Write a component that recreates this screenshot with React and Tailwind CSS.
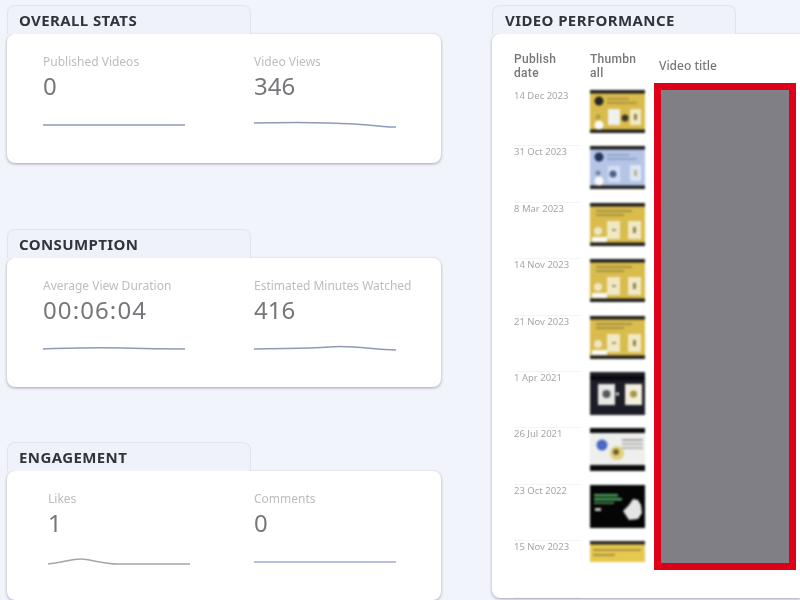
const sans = { fontFamily: '"Noto Sans", sans-serif' };
const headFont = { fontFamily: 'Roboto, sans-serif' };

const videos = [
  { date: '14 Dec 2023', kind: 'gold' },
  { date: '31 Oct 2023', kind: 'blue' },
  { date: '8 Mar 2023', kind: 'goldAlt' },
  { date: '14 Nov 2023', kind: 'goldAlt' },
  { date: '21 Nov 2023', kind: 'goldAlt' },
  { date: '1 Apr 2021', kind: 'dark' },
  { date: '26 Jul 2021', kind: 'light' },
  { date: '23 Oct 2022', kind: 'black' },
  { date: '15 Nov 2023', kind: 'cut' },
];

// thumbnails are pictures in the reference, so they are drawn
const Thumb = ({ kind }) => {
  if (kind === 'cut') {
    return (
      <svg width="55" height="21" viewBox="0 0 55 21" className="shrink-0 blur-[0.8px]">
        <rect width="55" height="21" fill="#e6c84f" />
        <rect width="55" height="3.5" fill="#2a2620" />
        <rect x="3" y="8" width="48" height="2" fill="#a8923c" />
        <rect x="3" y="13" width="22" height="2" fill="#a8923c" />
      </svg>
    );
  }
  if (kind === 'dark') {
    return (
      <svg width="55" height="43" viewBox="0 0 55 43" className="shrink-0 blur-[0.8px]">
        <rect width="55" height="43" fill="#1c1d26" />
        <rect y="4" width="55" height="4" fill="#08080a" />
        <rect x="8" y="12" width="17" height="21" fill="#e8e8e6" />
        <circle cx="16.5" cy="22" r="4" fill="#55565c" />
        <circle cx="27.5" cy="22" r="1.8" fill="#d4d4d8" />
        <rect x="35" y="12" width="17" height="21" fill="#f2efdf" />
        <circle cx="43.5" cy="22" r="3.5" fill="#a69543" />
      </svg>
    );
  }
  if (kind === 'light') {
    return (
      <svg width="55" height="43" viewBox="0 0 55 43" className="shrink-0 blur-[0.8px]">
        <rect width="55" height="43" fill="#eeeeec" />
        <rect width="55" height="5" fill="#0b0b0d" />
        <rect y="37" width="55" height="6" fill="#0b0b0d" />
        <circle cx="12" cy="17" r="5.5" fill="#4a69c4" />
        <circle cx="27" cy="25" r="7" fill="#e0cf78" />
        <circle cx="26" cy="24" r="3" fill="#6b6330" />
        <rect x="32" y="11" width="21" height="2" fill="#a3a3a3" />
        <rect x="32" y="15" width="21" height="2" fill="#b5b5b5" />
        <rect x="32" y="19" width="21" height="2" fill="#b5b5b5" />
      </svg>
    );
  }
  if (kind === 'black') {
    return (
      <svg width="55" height="43" viewBox="0 0 55 43" className="shrink-0 blur-[0.8px]">
        <rect width="55" height="43" fill="#050505" />
        <rect x="4" y="9" width="24" height="2.5" fill="#4aa35a" />
        <rect x="4" y="13" width="28" height="2.5" fill="#4aa35a" />
        <rect x="4" y="17" width="20" height="2" fill="#3a7f48" />
        <rect x="5" y="23" width="6" height="3" fill="#c9c9c9" />
        <path d="M33 26l6-6 4-6 5 1 3 5 1 8-4 6-9 1z" fill="#e4e4e4" />
      </svg>
    );
  }
  const blue = kind === 'blue';
  const bg = blue ? '#b4c5e6' : '#d9bc4c';
  const text = blue ? '#8d9fc6' : '#a89240';
  return (
    <svg width="55" height="43" viewBox="0 0 55 43" className="shrink-0 blur-[0.8px]">
      <rect width="55" height="43" fill={bg} />
      <rect width="55" height="3.5" fill="#1f1c1a" />
      <rect y="39.5" width="55" height="3.5" fill="#1f1c1a" />
      {kind === 'goldAlt' ? (
        <>
          <rect x="6" y="7" width="36" height="2" fill={text} />
          <rect x="6" y="11" width="28" height="2" fill={text} />
          <circle cx="8" cy="28" r="4" fill="#efe7c4" />
          <rect x="2" y="34" width="15" height="5" fill="#fafafa" />
          <rect x="17" y="18" width="13" height="18" fill="#f1e8c4" />
          <rect x="38" y="18" width="13" height="18" fill="#f1e8c4" />
          <rect x="22" y="26" width="4" height="2" fill="#9b9678" />
          <rect x="43" y="24" width="3" height="6" fill="#8e8350" />
        </>
      ) : (
        <>
          <circle cx="9" cy="11" r="4.5" fill={blue ? '#24325c' : '#2a2620'} />
          <rect x="17" y="8" width="22" height="1.8" fill={text} />
          <rect x="17" y="12" width="30" height="1.8" fill={text} />
          <circle cx="8" cy="27" r="2.5" fill={blue ? '#77849f' : '#b09a44'} />
          <circle cx="9" cy="35" r="4.5" fill="#fafafa" />
          <rect x="18" y={blue ? 20 : 19} width="12" height="16" fill={blue ? '#d5dff2' : '#eef0f2'} />
          <circle cx={blue ? 23 : 35} cy="28" r="3.5" fill={blue ? '#4c5f8c' : '#3a3526'} />
          <rect x="40" y="19" width="11" height="16" fill={blue ? '#dfe6f3' : '#f1e8c4'} />
          <rect x="44" y="24" width="3" height="6" fill={blue ? '#b5b39a' : '#8e8350'} />
        </>
      )}
    </svg>
  );
};

const Spark = ({ d, stroke = '#8f9ab8' }) => (
  <svg width="146" height="14" viewBox="0 0 146 14" className="mt-[16px] block blur-[0.3px]">
    <path d={d} fill="none" stroke={stroke} strokeWidth="1.5" />
  </svg>
);

const Stat = ({ label, value, d, stroke, valueClass = '', className = 'w-[211px] shrink-0' }) => (
  <div className={className}>
    <div className="h-[17px] text-[12px] leading-[18px] text-[#bdbdc1] blur-[0.3px]">{label}</div>
    <div className={`h-[32px] text-[24px] leading-[32px] text-[#77777b] blur-[0.2px] ${valueClass}`}>{value}</div>
    <Spark d={d} stroke={stroke} />
  </div>
);

const Tab = ({ title, className = 'pl-[11px]' }) => (
  <div className={`h-[29px] w-[244px] rounded-t-lg border border-b-0 border-[#e0e4ee] bg-[#eff2f9] pt-[4px] text-[15px] leading-[20px] font-bold tracking-[0.4px] whitespace-nowrap text-[#32343c] blur-[0.2px] ${className}`}>
    {title}
  </div>
);

const StatSection = ({ title, className = '', children }) => (
  <section className={className}>
    <Tab title={title} />
    <div className="flex h-[129px] rounded-lg bg-white pl-[36px] pt-[19px] shadow-[0_1px_3px_rgba(60,65,85,0.45)]">
      {children}
    </div>
  </section>
);

const App = () => (
  <div className="flex h-[600px] w-[800px] overflow-hidden bg-[#f1f4fb] pt-[5px] pl-[7px]" style={sans}>
    <div className="w-[434px] shrink-0">
      <StatSection title="OVERALL STATS">
        <Stat label="Published Videos" value="0" d="M0 7H142" />
        <Stat label="Video Views" value="346" d="M0 5C40 4 70 4 100 6S130 9 142 9" />
      </StatSection>
      <StatSection title="CONSUMPTION" className="mt-[66px]">
        <Stat label="Average View Duration" value="00:06:04" valueClass="tracking-[1.1px]" d="M0 7C30 6 50 5 80 6S120 7 142 7" />
        <Stat label="Estimated Minutes Watched" value="416" d="M0 7C30 6 50 7 75 5S120 8 142 8" />
      </StatSection>
      <StatSection title="ENGAGEMENT" className="mt-[55px]">
        <div className="ml-[5px] w-[206px] shrink-0">
          <Stat className="w-full" label="Likes" value="1" d="M0 9C15 7 25 4 33 4S55 9 70 9H142" stroke="#a3a5ad" />
        </div>
        <Stat label="Comments" value="0" d="M0 7H142" stroke="#a3a8d8" />
      </StatSection>
    </div>

    <section className="ml-[51px] flex-1">
      <Tab title="VIDEO PERFORMANCE" className="pl-[12px]" />
      <div className="flex h-[564px] rounded-l-lg bg-white pl-[22px] shadow-[0_1px_3px_rgba(60,65,85,0.45)]">
        <div className="w-[140px] shrink-0 pt-[18px]">
          <div className="flex h-[38px] text-[12px] leading-[14px] font-medium tracking-[0.3px] text-[#77777b] blur-[0.3px]" style={headFont}>
            <div className="w-[76px]">Publish<br />date</div>
            <div className="w-[60px]">Thumbn<br />all</div>
          </div>
          {videos.map((v) => (
            <div key={v.date} className="flex h-[56.4px]">
              <div className="mr-[10px] w-[66px] border-b border-[#f4f4f7] text-[9.5px] leading-[12px] text-[#a6a6aa] blur-[0.3px]">{v.date}</div>
              <Thumb kind={v.kind} />
            </div>
          ))}
        </div>
        <div className="w-[142px] shrink-0">
          <div className="h-[49px] pl-[5px] pt-[23px] text-[12px] leading-[18px] font-medium text-[#77777b] blur-[0.3px]">
            Video title
          </div>
          <div className="h-[487px] border-[7px] border-[#dc0019] bg-[#7f7f85]" />
        </div>
      </div>
    </section>
  </div>
);

export default App;
